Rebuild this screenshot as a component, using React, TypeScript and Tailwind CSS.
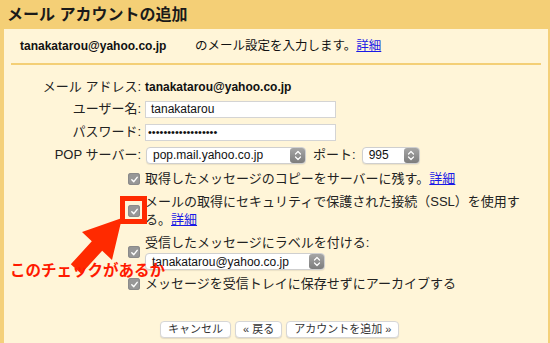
const FONT = "font-['Liberation_Sans','Noto_Sans_CJK_JP',sans-serif]";

function Check() {
  return (
    <div className="w-[12px] h-[12px] rounded-[3px] bg-[#979797] flex items-center justify-center shadow-[inset_0_0_0_1px_#8a8a8a]">
      <svg width="9" height="9" viewBox="0 0 10 10">
        <path d="M2 5.3 L4.2 7.4 L8 2.6" fill="none" stroke="#fff" strokeWidth="1.6" strokeLinecap="round" strokeLinejoin="round" />
      </svg>
    </div>
  );
}

function Stepper() {
  return (
    <div className="w-[15px] h-[15px] rounded-[3px] bg-gradient-to-b from-[#a6a6a6] to-[#7d7d7d] flex items-center justify-center">
      <svg width="8" height="11" viewBox="0 0 8 11">
        <path d="M1.5 4 L4 1.5 L6.5 4 M1.5 7 L4 9.5 L6.5 7" fill="none" stroke="#fff" strokeWidth="1.2" strokeLinecap="round" strokeLinejoin="round" />
      </svg>
    </div>
  );
}

function Select({ value, width }: { value: string; width: string }) {
  return (
    <div className={`${width} h-[17px] bg-white border border-[#cfcfcf] rounded-[4px] flex items-center justify-between pl-[6px] shadow-[0_1px_1px_rgba(0,0,0,0.08)]`}>
      <span className="text-[12px] leading-none text-[#111]">{value}</span>
      <Stepper />
    </div>
  );
}

function Row({ label, children, className = '' }: { label: React.ReactNode; children: React.ReactNode; className?: string }) {
  return (
    <div className={`flex items-center ${className}`}>
      <div className="w-[139px] shrink-0 text-right text-[13px] leading-[20px] text-[#222] pr-[2px]">{label}</div>
      <div className="flex items-center">{children}</div>
    </div>
  );
}

function CheckRow({ children, className = '' }: { children: React.ReactNode; className?: string }) {
  return (
    <div className={`flex items-center ${className}`}>
      <div className="w-[139px] shrink-0 flex justify-end pr-[3px]">
        <Check />
      </div>
      <div className="pl-[2px] text-[13px] leading-[18px] text-[#222]">{children}</div>
    </div>
  );
}

function Link({ children }: { children: React.ReactNode }) {
  return <span className="text-[#1a1ae6] underline">{children}</span>;
}

function Button({ children }: { children: React.ReactNode }) {
  return (
    <div className="h-[17px] px-[7px] bg-white border border-[#d6d6d6] rounded-[4px] shadow-[0_1px_1px_rgba(0,0,0,0.1)] flex items-center text-[11px] leading-none text-[#333]">
      {children}
    </div>
  );
}

export default function App() {
  return (
    <div className={`${FONT} relative w-[550px] h-[343px] overflow-hidden bg-[#fff5d8] flex flex-col`}>
      <div className="h-[29px] shrink-0 bg-[#f4cf76] pl-[7px] flex items-center text-[16px] font-bold text-[#1a1a1a]">
        メール アカウントの追加
      </div>

      <div className="flex-1 border-l-[4px] border-r-[2px] border-[#f4d07a]">
        <div className="h-[34px] flex items-center pl-[16px]">
          <span className="w-[175px] text-[12px] font-bold text-[#111]">tanakatarou@yahoo.co.jp</span>
          <span className="text-[12.5px] text-[#111]">
            のメール設定を入力します。<Link>詳細</Link>
          </span>
        </div>
        <div className="ml-[7px] w-[530px] h-[2px] bg-[#f4cf76]" />

        <Row label="メール アドレス:" className="mt-[12px]">
          <span className="pl-[2px] text-[12px] font-bold text-[#111]">tanakatarou@yahoo.co.jp</span>
        </Row>
        <Row label="ユーザー名:" className="mt-[2px]">
          <div className="ml-[2px] w-[191px] h-[17px] bg-white border border-[#d4d4d4] pl-[5px] flex items-center text-[12px] text-[#111]">
            tanakatarou
          </div>
        </Row>
        <Row label="パスワード:" className="mt-[3px]">
          <div className="ml-[2px] w-[191px] h-[17px] bg-white border border-[#d4d4d4] pl-[2px] flex items-center text-[11px] leading-none text-[#111]">
            ••••••••••••••••••
          </div>
        </Row>
        <Row label="POP サーバー:" className="mt-[3px]">
          <div className="ml-[3px]">
            <Select value="pop.mail.yahoo.co.jp" width="w-[160px]" />
          </div>
          <span className="ml-[7px] mr-[6px] text-[13px] text-[#222]">ポート:</span>
          <Select value="995" width="w-[58px]" />
        </Row>

        <CheckRow className="mt-[4px] h-[20px]">
          取得したメッセージのコピーをサーバーに残す。<Link>詳細</Link>
        </CheckRow>
        <CheckRow className="mt-[4px]">
          メールの取得にセキュリティで保護された接続（SSL）を使用す
          <br />
          る。<Link>詳細</Link>
        </CheckRow>
        <CheckRow className="mt-[5px]">
          <div>受信したメッセージにラベルを付ける:</div>
          <div className="mt-[1px]">
            <Select value="tanakatarou@yahoo.co.jp" width="w-[180px]" />
          </div>
        </CheckRow>
        <CheckRow className="mt-[5px]">メッセージを受信トレイに保存せずにアーカイブする</CheckRow>

        <div className="mt-[28px] pl-[156px] flex gap-[4px]">
          <Button>キャンセル</Button>
          <Button>« 戻る</Button>
          <Button>アカウントを追加 »</Button>
        </div>
      </div>

      {/* annotation */}
      <div className="absolute left-[120px] top-[196px] w-[27px] h-[28px] border-[5px] border-[#ff2a00]" />
      <svg className="absolute left-0 top-0" width="550" height="343" viewBox="0 0 550 343">
        <polygon
          points="122,218 82,232 91.8,241.3 70.8,264.3 81.2,273.7 102.2,250.7 112,260"
          fill="#ff2a00"
        />
      </svg>
      <div className="absolute left-[10px] top-[261px] text-[15.5px] font-bold leading-[20px] text-[#ff1a00]">
        このチェックがあるか
      </div>
    </div>
  );
}
